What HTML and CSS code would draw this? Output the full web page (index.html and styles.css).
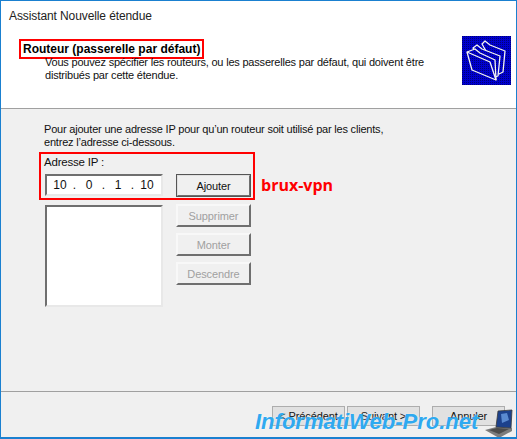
FILE: index.html
```html
<!DOCTYPE html>
<html lang="fr">
<head>
<meta charset="utf-8">
<title>Assistant Nouvelle étendue</title>
<link rel="stylesheet" href="styles.css">
</head>
<body>
<div class="window">
  <div class="titlebar">Assistant Nouvelle étendue</div>
  <header class="head">
    <div class="head-text">
      <h1 class="head-title">Routeur (passerelle par défaut)</h1>
      <p class="head-desc">Vous pouvez spécifier les routeurs, ou les passerelles par défaut, qui doivent être<br>distribués par cette étendue.</p>
    </div>
    <svg class="wizard-icon" width="49" height="49" viewBox="0 0 49 49" aria-hidden="true">
      <defs>
        <pattern id="dots" width="2" height="2" patternUnits="userSpaceOnUse">
          <rect width="2" height="2" fill="#0000d0"/>
          <rect width="1" height="1" fill="#000078"/>
        </pattern>
      </defs>
      <rect width="49" height="49" fill="url(#dots)"/>
      <g fill="url(#dots)" stroke="#f4f4f4" stroke-width="1.3" stroke-linejoin="round">
        <path d="M20 8 L23 5 L28 9 L43 15 L41 36 L37 38 Z"/>
        <path d="M11 12 L15 9 L20 13 L38 20 L36 40 L33 41 Z"/>
        <path d="M5 16 L13 13 L18 17 L33 24 L34 44 L10 34 Z"/>
        <path d="M5 16 L28 26 L34 44" fill="none"/>
      </g>
    </svg>
  </header>
  <main class="body">
    <p class="intro">Pour ajouter une adresse IP pour qu’un routeur soit utilisé par les clients,<br>entrez l’adresse ci-dessous.</p>
    <div class="ip-label">Adresse IP :</div>
    <div class="editor">
      <div class="col-left">
        <div class="ip-field"><span>10</span><i>.</i><span>0</span><i>.</i><span>1</span><i>.</i><span>10</span></div>
        <div class="listbox"></div>
      </div>
      <div class="col-right">
        <button class="btn btn-main" type="button">Ajouter</button>
        <div class="side-stack">
          <button class="btn btn-off" type="button">Supprimer</button>
          <button class="btn btn-off" type="button">Monter</button>
          <button class="btn btn-off" type="button">Descendre</button>
        </div>
      </div>
      <div class="server-name">brux-vpn</div>
    </div>
    <div class="mark-ip"></div>
  </main>
  <footer class="foot">
    <button class="wiz-btn" type="button">&lt; Précédent</button>
    <button class="wiz-btn" type="button">Suivant &gt;</button>
    <button class="wiz-btn wiz-cancel" type="button">Annuler</button>
  </footer>
  <div class="watermark">InformatiWeb-Pro.net</div>
  <svg class="laptop" width="31" height="30" viewBox="0 0 31 30" aria-hidden="true">
    <path d="M0 22 L11 19 L27 20 L27 23 L14 30 Z" fill="#7c7c7c"/>
    <path d="M4 22 L12 20 L24 21 L14 26 Z" fill="#4c4c4c"/>
    <path d="M13 3 L27 2 L26 20 L11 19 Z" fill="#1c418c" stroke="#3a3a3a" stroke-width="0.8"/>
    <path d="M16 6 L22 5 L24 12 L17 15 Z" fill="#5a8ad0"/>
  </svg>
</div>
</body>
</html>
```
FILE: styles.css
```css
* { box-sizing: border-box; }
html, body { margin: 0; padding: 0; }
body { width: 517px; height: 439px; overflow: hidden; background: #fff; }
.window {
  position: relative;
  width: 517px;
  height: 439px;
  display: flex;
  flex-direction: column;
  border: 1px solid #1a80d0;
  border-bottom-width: 2px;
  background: #f0f0f0;
  color: #111;
  font: 11px/13px "Liberation Sans", Arial, sans-serif;
  letter-spacing: -0.2px;
  overflow: hidden;
}
.titlebar { height: 29px; background: #fff; padding: 9px 0 0 8px; color: #222; font-size: 12px; letter-spacing: -0.1px; }
.head {
  height: 79px;
  background: #fff;
  border-bottom: 1px solid #a0a0a0;
  display: flex;
  justify-content: space-between;
  padding: 9px 5px 0 18px;
}
.head-title {
  margin: 0;
  width: 185px;
  height: 20px;
  padding: 1px 0 0 2px;
  border: 2px solid #f00;
  font: bold 12px/14px "Liberation Sans", Arial, sans-serif;
  letter-spacing: 0;
  color: #000;
  white-space: nowrap;
}
.head-desc { margin: -3px 0 0 26px; white-space: nowrap; }
.wizard-icon { display: block; margin-top: -3px; }
.body { position: relative; height: 282px; padding: 14px 0 0 43px; }
.intro { margin: 0; }
.ip-label { margin-top: 6px; height: 19px; padding-top: 1px; font-size: 11.5px; }
.editor { display: flex; align-items: flex-start; }
.col-left { width: 118px; margin-left: 1px; }
.ip-field {
  height: 22px;
  background: #fff;
  border: 2px solid #6f6f6f;
  border-right-color: #e8e8e8;
  border-bottom-color: #e8e8e8;
  display: grid;
  grid-template-columns: 24px 5px 24px 5px 24px 5px 24px;
  align-items: center;
  padding-left: 1px;
  font-size: 12px;
  letter-spacing: 0;
}
.ip-field span { text-align: center; }
.ip-field i { font-style: normal; text-align: center; }
.listbox {
  height: 102px;
  margin-top: 9px;
  background: #fff;
  border: 2px solid #6f6f6f;
  border-right-color: #e8e8e8;
  border-bottom-color: #e8e8e8;
}
.col-right { margin-left: 13px; width: 75px; }
.btn, .wiz-btn {
  display: block;
  font: 11px "Liberation Sans", Arial, sans-serif;
  letter-spacing: -0.1px;
  padding: 0;
  text-align: center;
}
.btn { width: 75px; height: 23px; background: #f0f0f0; border: 2px solid #6f6f6f; border-top-color: #f8f8f8; border-left-color: #f8f8f8; color: #111; }
.btn-main { border-top-color: #e0e0e0; border-left-color: #e0e0e0; outline: 1px solid #555; outline-offset: -1px; }
.side-stack { margin-top: 7px; display: flex; flex-direction: column; gap: 6px; }
.btn-off { color: #a0a0a0; }
.server-name { margin: 2px 0 0 10px; font: bold 16px/18px "Open Sans", sans-serif; letter-spacing: 0; color: #f00; }
.mark-ip { position: absolute; left: 38px; top: 43px; width: 216px; height: 48px; border: 2px solid #f00; }
.foot { flex: 1; border-top: 1px solid #a0a0a0; display: flex; padding: 14px 0 0 271px; gap: 2px; }
.wiz-btn { width: 73px; height: 20px; background: #e1e1e1; border: 1px solid #adadad; color: #111; }
.wiz-cancel { margin-left: 10px; }
.watermark {
  position: absolute;
  left: 254px;
  top: 410px;
  font: italic bold 22px/22px "Liberation Sans", Arial, sans-serif;
  letter-spacing: 0;
  color: #2fa9f0;
  white-space: nowrap;
  text-shadow: 0 0 2px rgba(255, 255, 255, 0.6);
}
.laptop { position: absolute; left: 484px; top: 407px; }
```
